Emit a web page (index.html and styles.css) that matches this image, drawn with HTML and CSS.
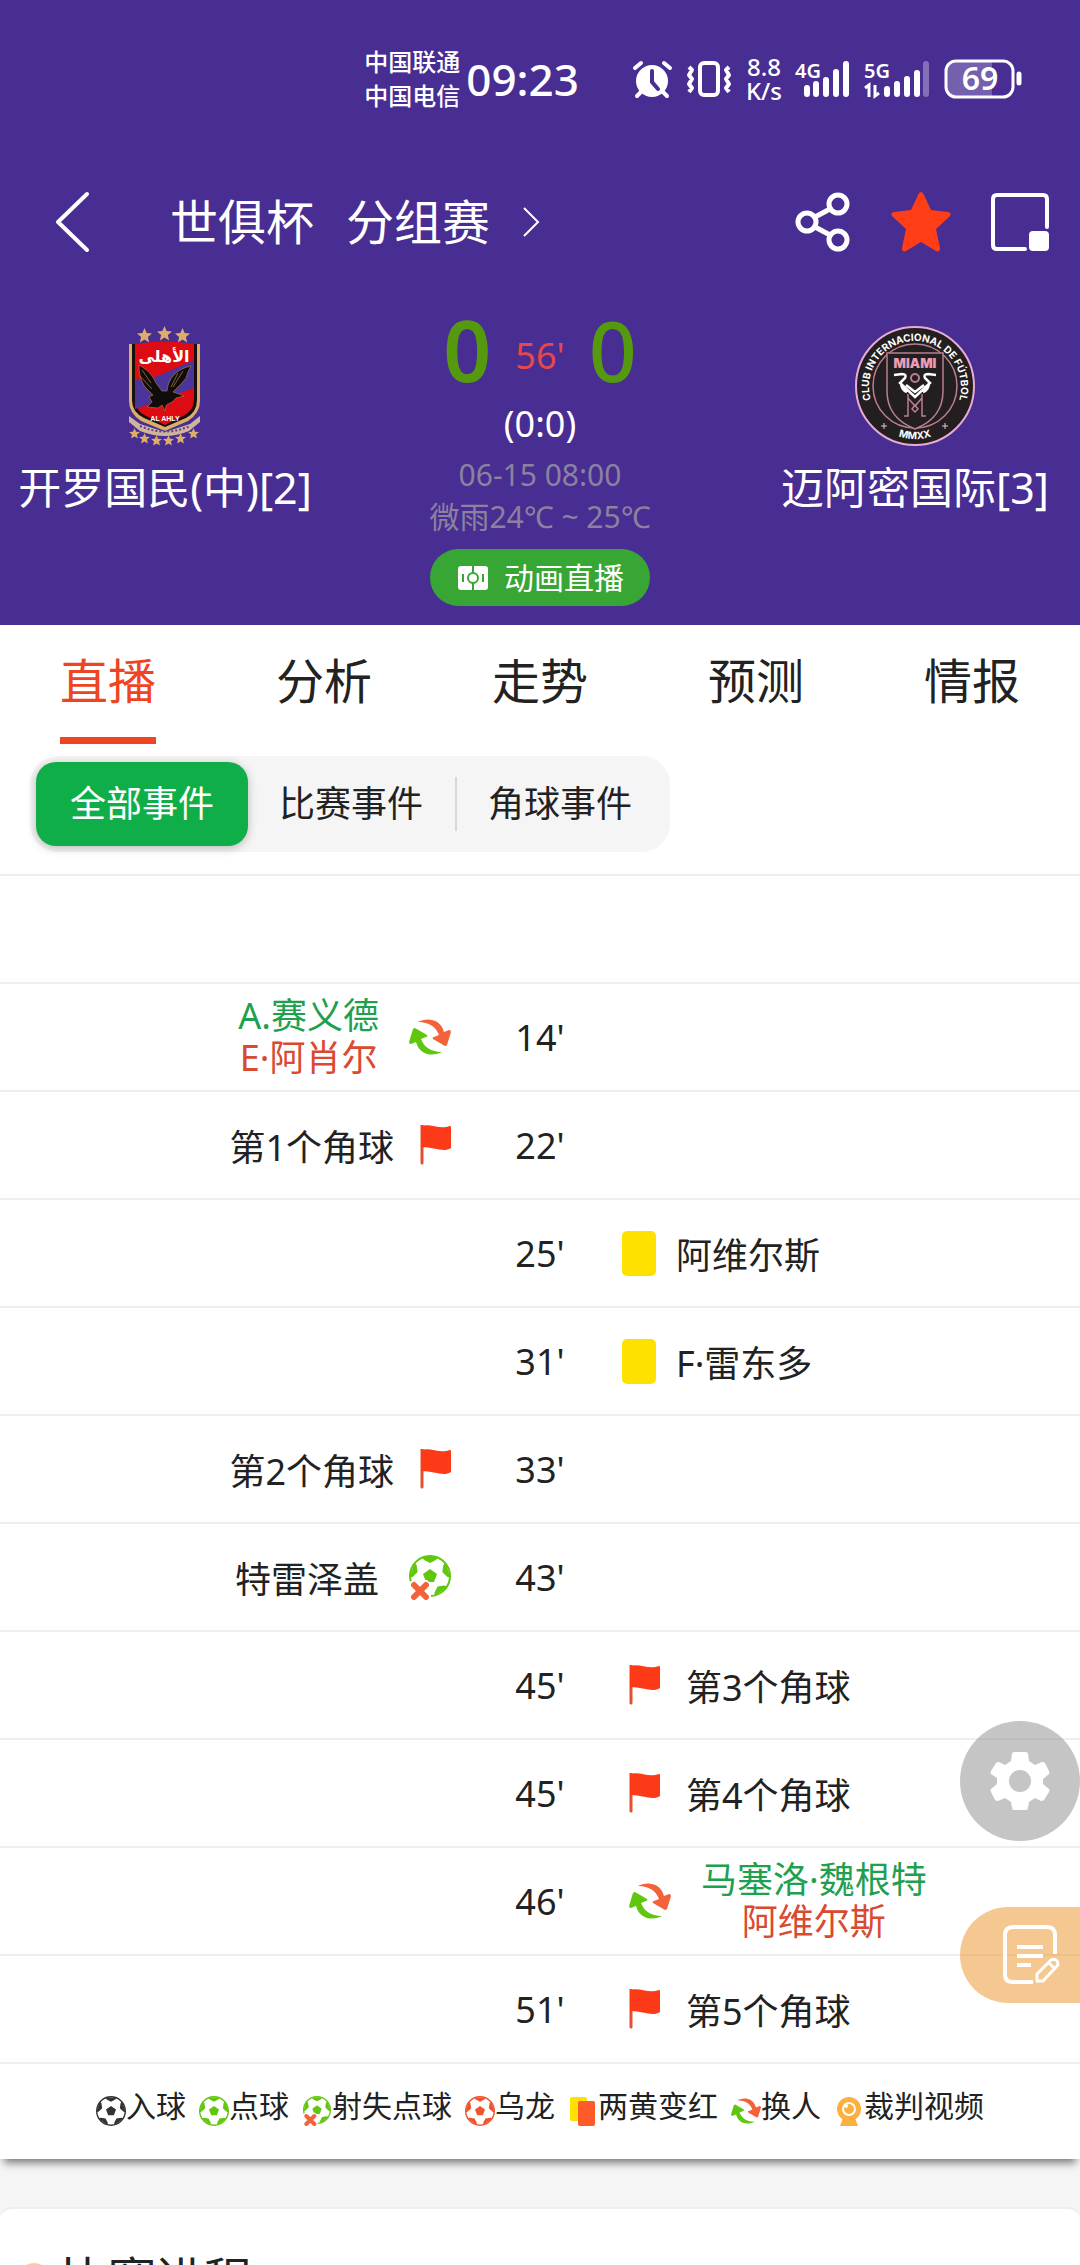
FILE: index.html
```
<!DOCTYPE html>
<html lang="zh-CN">
<head>
    <meta charset="UTF-8">
    <meta name="viewport" content="width=device-width, initial-scale=1.0">
    <title>开罗国民 - 迈阿密国际</title>
    <link rel="stylesheet" href="styles.css">
</head>
<body>
    <!-- Shared icons -->
    <svg class="sprite" aria-hidden="true">
        <symbol id="ball" viewBox="0 0 42 42">
            <circle cx="21" cy="21" r="20" fill="#fff" stroke="currentColor" stroke-width="2"/>
            <g fill="currentColor">
                <path d="M21 14l7 5-3 8h-8l-3-8z"/>
                <path id="patch" d="M13 2h16l-2 3-6 3-6-3z"/>
                <use href="#patch" transform="rotate(72 21 21)"/>
                <use href="#patch" transform="rotate(144 21 21)"/>
                <use href="#patch" transform="rotate(216 21 21)"/>
                <use href="#patch" transform="rotate(288 21 21)"/>
            </g>
        </symbol>
        <symbol id="ball-missed" viewBox="0 0 42 45">
            <use href="#ball" width="42" height="42"/>
            <path d="M0 27l4-2h14l4 4v13l-4 3H0z" fill="#fff"/>
            <path d="M5 30l12 12M17 30L5 42" stroke="#f4623a" stroke-width="6" stroke-linecap="round"/>
        </symbol>
        <symbol id="swap" viewBox="0 0 42 36">
            <path d="M9 3C16-1 31-2 35 13l5-2q2 0 2 2l-4 13q-1 1-2 1l-12-7q-1-2 1-2l5-2C27 8 20 3 9 3z" fill="#f4623a"/>
            <path d="M9 3C16-1 31-2 35 13l5-2q2 0 2 2l-4 13q-1 1-2 1l-12-7q-1-2 1-2l5-2C27 8 20 3 9 3z" fill="#60c60e" transform="rotate(180 21 18)"/>
        </symbol>
        <symbol id="flag" viewBox="0 0 31 40">
            <path d="M2 0v38" stroke="#e2512f" stroke-width="3" stroke-linecap="round"/>
            <path d="M1 1c10-3 18 4 29 0q1 0 1 1v21c-8 5-16-1-30-1z" fill="#fd3a18"/>
        </symbol>
        <symbol id="star" viewBox="0 0 12 12">
            <path d="M6 0l1.700 4 4.300.400-3.300 2.800 1 4.300L6 9.200l-3.700 2.300 1-4.300L0 4.400 4.300 4z" fill="#dcae6c"/>
        </symbol>
    </svg>

    <header class="header">
        <div class="status-bar">
            <div class="carriers"><span>中国联通</span><span>中国电信</span></div>
            <time class="clock">09:23</time>
            <svg width="39" height="36" viewBox="0 0 39 36">
                <circle cx="19" cy="20" r="16" fill="#fff"/>
                <path d="M2 7l6-5M37 7l-6-5M8 31l-4 4M30 31l4 4" stroke="#fff" stroke-width="4" stroke-linecap="round"/>
                <path d="M19 10v11l6 7" fill="none" stroke="#482d92" stroke-width="4" stroke-linecap="round"/>
            </svg>
            <svg width="46" height="36" viewBox="0 0 46 36" fill="none" stroke="#fff" stroke-width="4">
                <rect x="14" y="2" width="18" height="32" rx="4"/>
                <path d="M3 6l3 3-3 5 3 4-3 5 3 4-3 4M43 6l-3 3 3 5-3 4 3 5-3 4 3 4" stroke-linejoin="round"/>
            </svg>
            <div class="speed"><span>8.8</span><span>K/s</span></div>
            <svg class="signal" width="54" height="38" viewBox="0 0 54 38">
                <text x="-1" y="18">4G</text>
                <path d="M11 28v6M20 24v10M30 20v14M40 12v22M50 4v30" stroke="#fff" stroke-width="6" stroke-linecap="round"/>
            </svg>
            <svg class="signal" width="66" height="38" viewBox="0 0 66 38">
                <text x="0" y="18">5G</text>
                <path d="M1 28l4-3v12M11 25v11l4-3" fill="none" stroke="#fff" stroke-width="3"/>
                <path d="M23 29v5M33 24v10M43 19v15M53 13v21" stroke="#fff" stroke-width="6" stroke-linecap="round"/>
                <path d="M62 4v30" stroke="#8470b8" stroke-width="6" stroke-linecap="round"/>
            </svg>
            <svg class="battery" width="78" height="40" viewBox="0 0 78 40">
                <path d="M12 3h36v34H12q-9 0-9-9V12q0-9 9-9z" fill="#7560ad"/>
                <rect x="2" y="2" width="67" height="36" rx="10" fill="none" stroke="#fff" stroke-width="3"/>
                <path d="M75 15v9" stroke="#fff" stroke-width="5" stroke-linecap="round"/>
                <text x="36" y="31" text-anchor="middle">69</text>
            </svg>
        </div>

        <nav class="nav">
            <button class="icon-button" aria-label="返回">
                <svg width="34" height="60" viewBox="0 0 34 60"><path d="M32 2L3 30l29 28" fill="none" stroke="#fff" stroke-width="4" stroke-linecap="round" stroke-linejoin="round"/></svg>
            </button>
            <a class="nav-title" href="#">
                <span>世俱杯</span><span>分组赛</span>
                <svg width="18" height="30" viewBox="0 0 18 30"><path d="M2 1l14 14L2 29" fill="none" stroke="#fff" stroke-width="2"/></svg>
            </a>
            <div class="nav-actions">
                <button class="icon-button" aria-label="分享">
                    <svg width="56" height="60" viewBox="0 0 56 60" fill="none" stroke="#fff" stroke-width="5">
                        <circle cx="12" cy="30" r="9"/><circle cx="43" cy="12" r="9"/><circle cx="43" cy="48" r="9"/>
                        <path d="M20 25l15-8M20 35l15 8"/>
                    </svg>
                </button>
                <button class="icon-button" aria-label="收藏">
                    <svg width="62" height="62" viewBox="0 0 62 62"><path d="M31 1q2 0 3 3l7 15 17 2q5 1 1 5L46 38l4 19q0 5-4 3L31 51 16 60q-4 2-4-3l4-19L3 26q-4-4 1-5l17-2 7-15q1-3 3-3z" fill="#ff3d17"/></svg>
                </button>
                <button class="icon-button" aria-label="小窗">
                    <svg width="58" height="58" viewBox="0 0 58 58">
                        <path d="M56 34V6q0-4-4-4H6Q2 2 2 6v46q0 4 4 4h28" fill="none" stroke="#fff" stroke-width="4" stroke-linecap="round"/>
                        <rect x="38" y="38" width="20" height="20" rx="4" fill="#fff"/>
                    </svg>
                </button>
            </div>
        </nav>

        <section class="match">
            <div class="team">
                <svg class="crest" width="120" height="120" viewBox="0 0 120 120">
                    <use href="#star" x="32" y="2" width="15" height="15"/>
                    <use href="#star" x="52" y="0" width="15" height="15"/>
                    <use href="#star" x="70" y="2" width="15" height="15"/>
                    <path d="M24 18h71v57q0 12-12 20L60 105 36 95Q24 87 24 75z" fill="#dcae6c"/>
                    <path d="M27 18h65v56q0 12-11 18l-21 9-21-9Q27 86 27 74z" fill="#17100e"/>
                    <path d="M30 18q30-5 59 0v55q0 12-11 17l-18 9-19-9Q30 85 30 73z" fill="#dd0b12"/>
                    <path d="M30 54q15 0 25-5l34-15v28L53 75l-23 8z" fill="#4b359b"/>
                    <text class="crest-arabic" x="59" y="36" text-anchor="middle">الأهلى</text>
                    <path d="M34 39c9 5 14 11 17 18l6 8 5 0c1-12 9-22 24-25l-3 6-2 6-4 5-5 5-4 4 6 2 5 2-8 2c-4 6-9 5-10 8l-1 5-3-6-4 3-11-1 5-5-3-5 4-2-8-8c-4-6-6-13-6-22z" fill="#100c0b" stroke="#b58544" stroke-width=".6"/>
                    <path d="M37 44l9 13M35 50l12 13M78 45l-10 16M73 47l-7 14" stroke="#a3783c" stroke-width=".8"/>
                    <text class="crest-name" x="60" y="95" text-anchor="middle">AL AHLY</text>
                    <path d="M24 90l11 8 25 8 25-8 10-8v6l-11 9q-24 10-49 0l-11-9z" fill="#cfb5a0"/>
                    <path d="M35 100q25 11 50 0" fill="none" stroke="#60417c" stroke-width="2" stroke-dasharray="2 2"/>
                    <use href="#star" x="24" y="102" width="11" height="11"/>
                    <use href="#star" x="34" y="107" width="11" height="11"/>
                    <use href="#star" x="46" y="109" width="11" height="11"/>
                    <use href="#star" x="58" y="109" width="11" height="11"/>
                    <use href="#star" x="70" y="107" width="11" height="11"/>
                    <use href="#star" x="83" y="102" width="11" height="11"/>
                </svg>
                <h2 class="team-name">开罗国民(中)[2]</h2>
            </div>

            <div class="summary">
                <div class="score">
                    <strong class="goals">0</strong>
                    <span class="minute">56'</span>
                    <span class="goals">0</span>
                </div>
                <div class="half-time">(0:0)</div>
                <div class="info">06-15 08:00</div>
                <div class="info">微雨24℃ ~ 25℃</div>
                <button class="animation-button">
                    <svg width="30" height="24" viewBox="0 0 30 24">
                        <rect width="30" height="24" rx="3" fill="#fff"/>
                        <path d="M15 0v24M5 8v8M25 8v8" stroke="#38a635" stroke-width="2"/>
                        <circle cx="15" cy="12" r="5" fill="#fff" stroke="#38a635" stroke-width="2"/>
                    </svg>
                    动画直播
                </button>
            </div>

            <div class="team">
                <svg class="crest" width="120" height="120" viewBox="0 0 120 120">
                    <defs>
                        <path id="ring-top" d="M27 93A46 46 0 1 1 93 93"/>
                        <path id="ring-bottom" d="M22 97A53 53 0 0 0 98 97"/>
                    </defs>
                    <circle cx="60" cy="60" r="59" fill="#231f20" stroke="#e9abd0" stroke-width="2"/>
                    <circle cx="60" cy="60" r="42" fill="none" stroke="#b97f91" stroke-width="1.500"/>
                    <path d="M32 27h56v38q0 27-28 38-28-11-28-38z" fill="#231f20" stroke="#b97f91" stroke-width="1.500"/>
                    <text class="ring-text"><textPath href="#ring-top" startOffset="50%" text-anchor="middle">CLUB INTERNACIONAL DE FÚTBOL</textPath></text>
                    <text class="ring-text"><textPath href="#ring-bottom" startOffset="50%" text-anchor="middle">MMXX</textPath></text>
                    <path d="M26 100h6M29 97v6M87 100h6M90 97v6" stroke="#e9c5d0" stroke-width="1"/>
                    <text class="miami" x="60" y="42" text-anchor="middle">MIAMI</text>
                    <circle cx="60" cy="52" r="4" fill="none" stroke="#b97f91" stroke-width="2"/>
                    <path d="M39 49l8-1q5 0 3 4l-5 5 15 14 15-14-5-5q-2-4 3-4l8 1M46 56q0 8 6 10M74 56q0 8-6 10M51 59l9 7 9-7" fill="none" stroke="#fff" stroke-width="2.500"/>
                    <path d="M53 68v22h-4M67 68v22h4M53 72l7 8 7-8M60 79l3 4-3 3-3-3z" fill="none" stroke="#b97f91" stroke-width="1.500"/>
                </svg>
                <h2 class="team-name">迈阿密国际[3]</h2>
            </div>
        </section>
    </header>

    <main class="content">
        <section class="live">
            <nav class="tabs">
                <a class="tab active" href="#">直播</a>
                <a class="tab" href="#">分析</a>
                <a class="tab" href="#">走势</a>
                <a class="tab" href="#">预测</a>
                <a class="tab" href="#">情报</a>
            </nav>

            <div class="filters">
                <button class="filter active">全部事件</button>
                <button class="filter">比赛事件</button>
                <button class="filter">角球事件</button>
            </div>

            <ul class="events">
                <li class="event"></li>
                <li class="event">
                    <div class="home"><div class="players"><span class="in">A.赛义德</span><span class="out">E·阿肖尔</span></div><svg class="icon-swap"><use href="#swap"/></svg></div>
                    <time>14'</time>
                    <div class="away"></div>
                </li>
                <li class="event">
                    <div class="home">第1个角球<svg class="icon-flag"><use href="#flag"/></svg></div>
                    <time>22'</time>
                    <div class="away"></div>
                </li>
                <li class="event">
                    <div class="home"></div>
                    <time>25'</time>
                    <div class="away"><span class="card"></span>阿维尔斯</div>
                </li>
                <li class="event">
                    <div class="home"></div>
                    <time>31'</time>
                    <div class="away"><span class="card"></span>F·雷东多</div>
                </li>
                <li class="event">
                    <div class="home">第2个角球<svg class="icon-flag"><use href="#flag"/></svg></div>
                    <time>33'</time>
                    <div class="away"></div>
                </li>
                <li class="event">
                    <div class="home">特雷泽盖<svg class="icon-missed green"><use href="#ball-missed"/></svg></div>
                    <time>43'</time>
                    <div class="away"></div>
                </li>
                <li class="event">
                    <div class="home"></div>
                    <time>45'</time>
                    <div class="away"><svg class="icon-flag"><use href="#flag"/></svg>第3个角球</div>
                </li>
                <li class="event">
                    <div class="home"></div>
                    <time>45'</time>
                    <div class="away"><svg class="icon-flag"><use href="#flag"/></svg>第4个角球</div>
                </li>
                <li class="event">
                    <div class="home"></div>
                    <time>46'</time>
                    <div class="away"><svg class="icon-swap"><use href="#swap"/></svg><div class="players"><span class="in">马塞洛·魏根特</span><span class="out">阿维尔斯</span></div></div>
                </li>
                <li class="event">
                    <div class="home"></div>
                    <time>51'</time>
                    <div class="away"><svg class="icon-flag"><use href="#flag"/></svg>第5个角球</div>
                </li>
            </ul>

            <ul class="legend">
                <li><svg class="black"><use href="#ball"/></svg>入球</li>
                <li><svg class="green"><use href="#ball"/></svg>点球</li>
                <li><svg class="green"><use href="#ball-missed"/></svg>射失点球</li>
                <li><svg class="red"><use href="#ball"/></svg>乌龙</li>
                <li><svg viewBox="0 0 30 30"><rect x="2" y="1" width="17" height="24" rx="2" fill="#ffe100"/><rect x="10" y="5" width="17" height="25" rx="2" fill="#ff5a2a"/></svg>两黄变红</li>
                <li><svg><use href="#swap"/></svg>换人</li>
                <li><svg viewBox="0 0 30 30"><circle cx="15" cy="13" r="12" fill="#fbb040"/><path d="M9 22h12l3 8H6z" fill="#fbb040"/><circle cx="15" cy="13" r="6" fill="none" stroke="#fff" stroke-width="2"/><circle cx="12" cy="10" r="2" fill="#fff"/></svg>裁判视频</li>
            </ul>
        </section>

        <section class="progress">
            <h2 class="progress-title">比赛进程</h2>
        </section>
    </main>

    <div class="floating">
        <button class="settings" aria-label="设置">
            <svg width="58" height="58" viewBox="0 0 58 58">
                <path fill="#fff" fill-rule="evenodd" d="M23 0h12q2 0 2 2l1 7 6 4 7-3q2 0 3 1l4 8q1 2 0 3l-6 5v5l6 5q1 1 0 3l-5 8q-1 1-3 1l-6-3-6 4-1 6q0 2-2 2H23q-2 0-2-2l-1-6-6-4-7 3q-2 0-3-1l-4-8q-1-2 0-3l6-5v-6L0 22q-1-1 0-3l5-8q1-1 3-1l6 3 6-4 1-7q0-2 2-2zM29 18a11 11 0 1 0 0 22 11 11 0 0 0 0-22z"/>
            </svg>
        </button>
        <button class="notes" aria-label="笔记">
            <svg width="58" height="60" viewBox="0 0 58 60" fill="none" stroke="#fff" stroke-width="4">
                <path d="M52 29V10q0-8-8-8H10q-8 0-8 8v40q0 7 8 7h20"/>
                <path d="M14 22h26M14 31h26M14 40h14"/>
                <path d="M34 56v-7l14-14q4-2 6 1 2 3 0 5L40 56zM46 38l5 5" stroke-width="3" stroke-linejoin="round"/>
            </svg>
        </button>
    </div>
</body>
</html>
```
FILE: styles.css
```
* {
    box-sizing: border-box;
}

body {
    font-family: "Noto Sans", "Noto Sans CJK SC", sans-serif;
    background-color: #f5f5f5;
    color: #222;
    display: flex;
    flex-direction: column;
    height: 100vh;
    margin: 0;
    overflow: hidden;
    font-size: 36px;
}

button {
    font: inherit;
    color: inherit;
    border: none;
    background: none;
    padding: 0;
    cursor: pointer;
}

a {
    color: inherit;
    text-decoration: none;
}

ul {
    list-style: none;
    margin: 0;
    padding: 0;
}

h2 {
    margin: 0;
    font-weight: normal;
}

svg {
    display: block;
    flex: none;
    overflow: visible;
}

.sprite {
    position: absolute;
    width: 0;
    height: 0;
}

/* Header */
.header {
    background-color: #482d92;
    color: #fff;
    flex: none;
    padding-bottom: 19px;
}

.status-bar {
    display: flex;
    align-items: center;
    justify-content: flex-end;
    gap: 14px;
    height: 158px;
    padding-right: 58px;
}

.carriers,
.speed {
    display: flex;
    flex-direction: column;
    font-size: 24px;
    font-weight: 500;
    line-height: 34px;
}

.speed {
    line-height: 24px;
    text-align: center;
}

.clock {
    font-size: 44px;
    font-weight: 500;
    line-height: 48px;
    margin-left: -8px;
    margin-right: 40px;
}

.signal text {
    font-size: 20px;
    font-weight: 600;
    fill: #fff;
}

.battery text {
    font-size: 32px;
    font-weight: 600;
    fill: #fff;
}

.nav {
    display: flex;
    align-items: center;
    height: 128px;
    padding: 0 31px 0 55px;
}

.nav-title {
    display: flex;
    align-items: center;
    gap: 32px;
    font-size: 48px;
    line-height: 64px;
    margin-left: 81px;
}

.nav-actions {
    display: flex;
    align-items: center;
    gap: 39px;
    margin-left: auto;
}

.match {
    display: grid;
    grid-template-columns: 330fr 420fr 330fr;
    padding-top: 32px;
}

.team,
.summary {
    display: flex;
    flex-direction: column;
    align-items: center;
}

.team {
    padding-top: 8px;
}

.team-name {
    font-size: 43px;
    line-height: 64px;
    margin-top: 10px;
    white-space: nowrap;
}

.crest-arabic {
    font: bold 16px "DejaVu Sans", sans-serif;
    fill: #fff;
}

.crest-name {
    font: bold 7px "Liberation Sans", sans-serif;
    fill: #fff;
}

.ring-text {
    font: bold 10px Inter, sans-serif;
    fill: #fff;
}

.miami {
    font: 900 13px Inter, sans-serif;
    fill: #eb9db4;
}

.score {
    display: flex;
    align-items: flex-end;
    gap: 24px;
    height: 70px;
    color: #55990f;
}

.goals {
    font-size: 84px;
    font-weight: 500;
    line-height: 76px;
}

strong.goals {
    font-weight: 600;
}

.minute {
    font-size: 36px;
    line-height: 64px;
    color: #e8474a;
}

.half-time {
    font-size: 36px;
    line-height: 52px;
    margin: 10px 0 4px;
}

.info {
    font-size: 30px;
    line-height: 42px;
    color: #8c819f;
}

.animation-button {
    display: flex;
    align-items: center;
    gap: 16px;
    background-color: #38a635;
    border-radius: 29px;
    font-size: 30px;
    line-height: 57px;
    margin-top: 11px;
    padding: 0 26px 0 28px;
}

/* Tabs */
.live {
    background-color: #fff;
    box-shadow: 0 8px 8px -4px rgba(0, 0, 0, 0.5);
}

.tabs {
    display: flex;
    justify-content: space-around;
    font-size: 48px;
}

.tab {
    line-height: 112px;
    border-bottom: 7px solid transparent;
}

.tab.active {
    color: #ee4422;
    border-color: #ee4422;
}

.filters {
    display: flex;
    align-items: center;
    width: fit-content;
    margin: 12px 0 22px 30px;
    padding: 6px;
    background-color: #f5f5f5;
    border-radius: 28px;
}

.filter {
    line-height: 54px;
    padding: 0 32px 0 31px;
}

.filter + .filter + .filter {
    border-left: 2px solid #d8d8d8;
}

.filter.active {
    background-color: #10ae48;
    color: #fff;
    border-radius: 20px;
    line-height: 84px;
    padding: 0 34px;
    box-shadow: 0 2px 10px rgba(0, 0, 0, 0.25);
}

/* Event timeline */
.event {
    display: grid;
    grid-template-columns: 1fr 178px 1fr;
    align-items: center;
    height: 108px;
    border-top: 2px solid #eee;
}

.event time {
    text-align: center;
}

.home,
.away {
    display: flex;
    align-items: center;
    gap: 26px;
}

.home {
    justify-content: flex-end;
}

.home .icon-missed {
    margin-left: 4px;
}

.home .players {
    margin-right: 4px;
}

.players {
    display: flex;
    flex-direction: column;
    align-items: center;
    line-height: 42px;
}

.away .players {
    margin-left: 4px;
}

.in {
    color: #1fa04f;
}

.out {
    color: #d94a30;
}

.card {
    width: 34px;
    height: 45px;
    margin-left: -7px;
    margin-right: -6px;
    background-color: #ffe100;
    border-radius: 5px;
}

.icon-flag {
    width: 31px;
    height: 40px;
}

.icon-swap {
    width: 42px;
    height: 36px;
}

.icon-missed {
    width: 42px;
    height: 45px;
}

.black {
    color: #333;
}

.green {
    color: #60c60e;
}

.red {
    color: #f0532d;
}

.legend {
    display: flex;
    justify-content: center;
    gap: 13px;
    border-top: 2px solid #eee;
    font-size: 30px;
    line-height: 44px;
    padding: 20px 0 31px;
}

.legend li {
    display: flex;
    align-items: center;
}

.legend svg {
    width: 30px;
    height: 30px;
    margin-top: 10px;
}

.progress {
    background-color: #fff;
    border-top: 2px solid #eee;
    border-radius: 12px;
    margin-top: 48px;
    padding: 34px 18px;
}

.progress-title {
    display: flex;
    align-items: center;
    gap: 10px;
    font-size: 48px;
    line-height: 72px;
}

.progress-title::before {
    content: "";
    width: 32px;
    height: 32px;
    border-radius: 50%;
    background-color: #fbcba8;
}

/* Floating buttons over the page */
.floating {
    position: fixed;
    right: 0;
    bottom: 262px;
    display: flex;
    flex-direction: column;
    gap: 66px;
}

.settings,
.notes {
    display: flex;
    align-items: center;
    justify-content: center;
    width: 120px;
    height: 120px;
    border-radius: 60px;
    background-color: rgba(140, 140, 140, 0.5);
}

.notes {
    height: 96px;
    padding-left: 24px;
    border-radius: 48px 0 0 48px;
    background-color: rgba(237, 146, 36, 0.5);
}
```
